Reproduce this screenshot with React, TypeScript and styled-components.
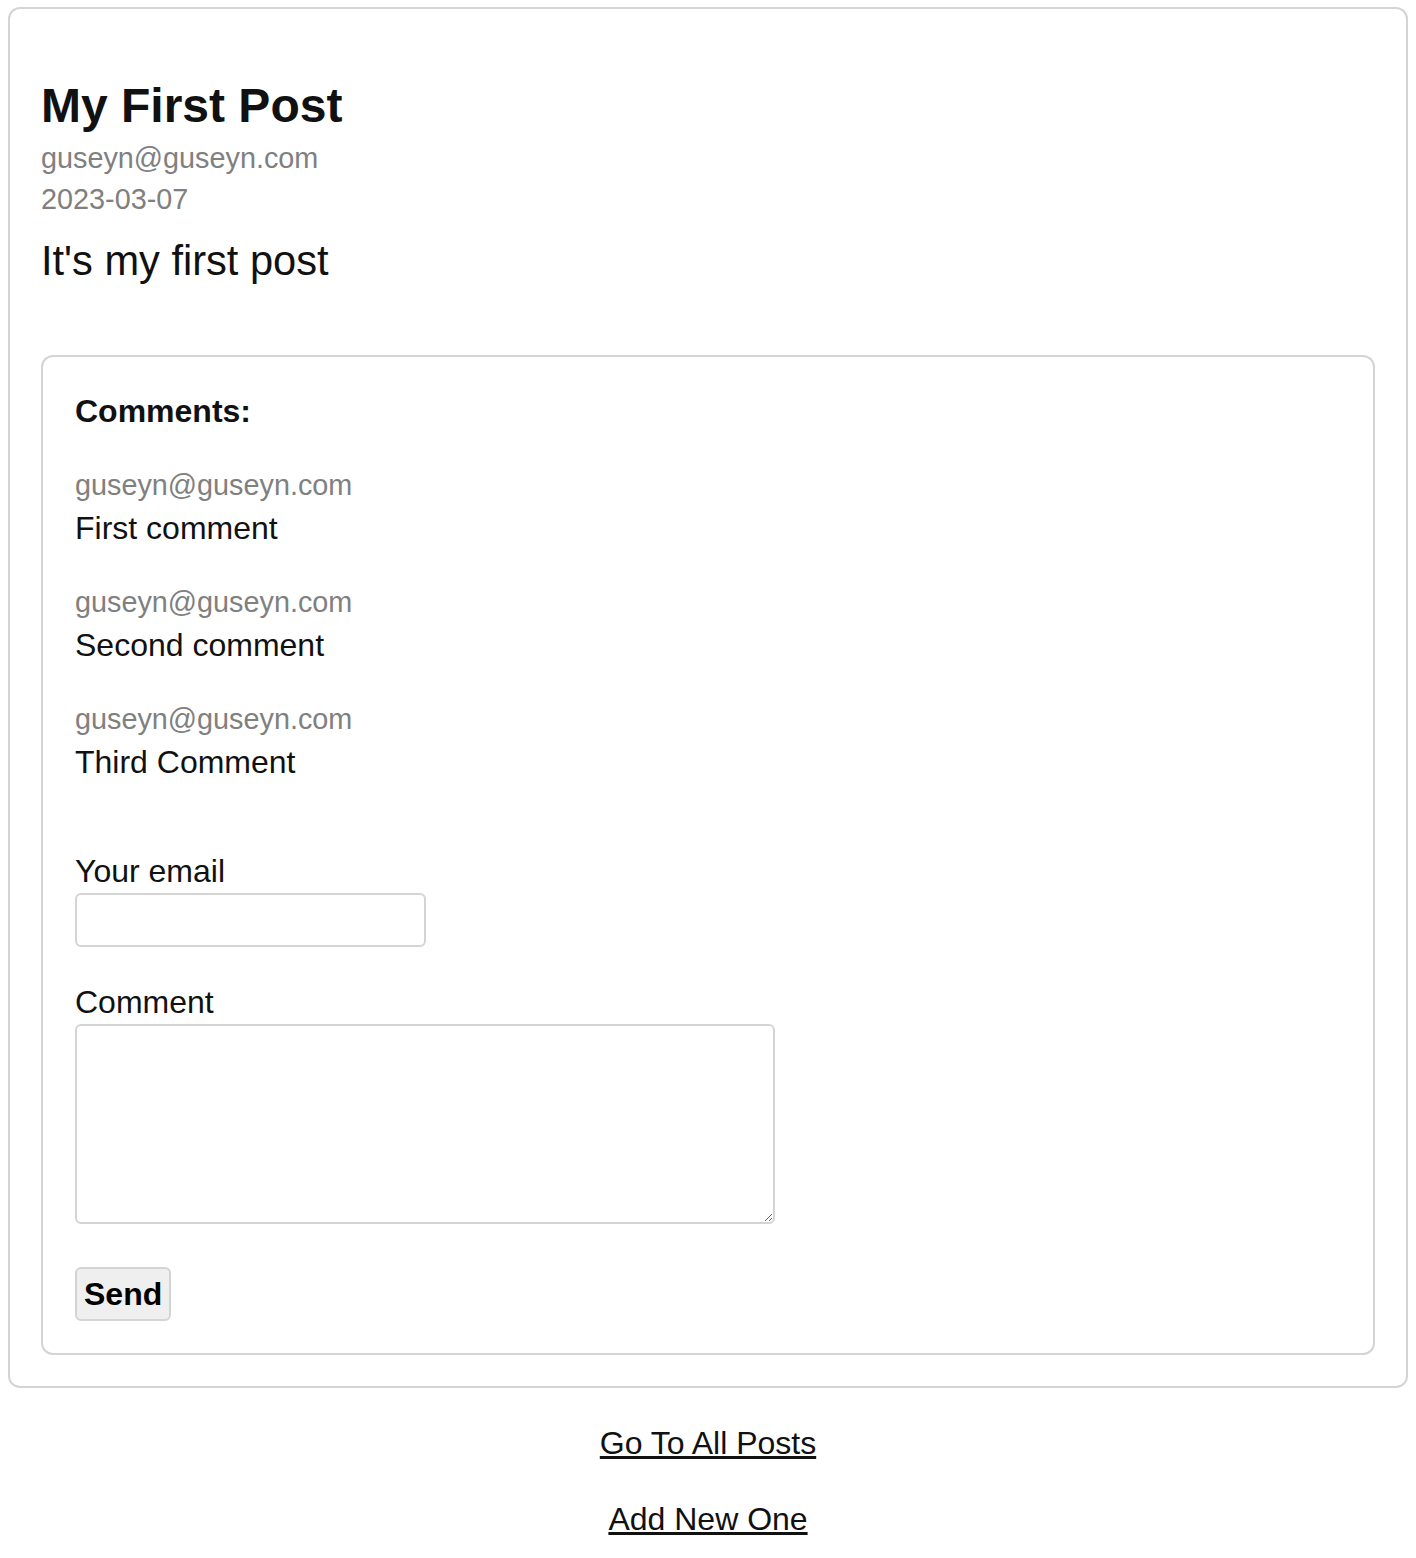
import React from "react";
import styled, { createGlobalStyle } from "styled-components";

const GlobalStyle = createGlobalStyle`
  body {
    margin: 7px 8px 8px 8px;
    font-family: "Liberation Sans", Arial, Helvetica, sans-serif;
    color: #111;
    background: #fff;
  }
`;

const PostCard = styled.article`
  border: 2px solid #d4d4d4;
  border-radius: 12px;
  padding: 68px 31px 31px;
`;

const Title = styled.h1`
  margin: 0;
  font-size: 48px;
  line-height: 58px;
  font-weight: 700;
  color: #111;
`;

const Meta = styled.div<{ $top: number; $lh: number }>`
  padding-top: ${(p) => p.$top}px;
  font-size: 28.8px;
  line-height: ${(p) => p.$lh}px;
  color: #808080;
`;

const Body = styled.p`
  margin: 11px 0 0;
  font-size: 41.6px;
  line-height: 60px;
  color: #111;
`;

const CommentsCard = styled.section`
  margin-top: 64px;
  border: 2px solid #d4d4d4;
  border-radius: 12px;
  padding: 34px 32px 32px;
`;

const Heading = styled.h3`
  margin: 0;
  font-size: 32px;
  line-height: 40px;
  font-weight: 700;
`;

const CommentList = styled.div`
  margin-top: 29px;
  display: flex;
  flex-direction: column;
  gap: 25px;
`;

const CommentItem = styled.div`
  display: flex;
  flex-direction: column;
`;

const CommentAuthor = styled.div`
  padding-top: 6px;
  font-size: 28.8px;
  line-height: 38px;
  color: #808080;
`;

const CommentText = styled.div`
  font-size: 32px;
  line-height: 48px;
  color: #111;
`;

const Form = styled.form`
  margin-top: 65px;
  display: flex;
  flex-direction: column;
  align-items: flex-start;
`;

const Field = styled.div<{ $gap: number }>`
  display: flex;
  flex-direction: column;
  align-items: flex-start;
  gap: ${(p) => p.$gap}px;
  & + & {
    margin-top: 35px;
  }
`;

const Label = styled.label`
  font-size: 32px;
  line-height: 40px;
  color: #111;
`;

const Input = styled.input`
  box-sizing: border-box;
  width: 351px;
  height: 54px;
  border: 2px solid #d4d4d4;
  border-radius: 6px;
  font-size: 28px;
  font-family: inherit;
  padding: 4px 8px;
  background: #fff;
  outline: none;
`;

const TextArea = styled.textarea`
  box-sizing: border-box;
  width: 700px;
  height: 200px;
  border: 2px solid #d4d4d4;
  border-radius: 6px;
  font-size: 28px;
  font-family: inherit;
  padding: 4px 8px;
  background: #fff;
  outline: none;
`;

const SendButton = styled.button`
  box-sizing: border-box;
  margin-top: 43px;
  height: 54px;
  padding: 0 7px;
  border: 2px solid #d4d4d4;
  border-radius: 6px;
  background: #efefef;
  font-family: inherit;
  font-size: 32px;
  font-weight: 700;
  color: #000;
  cursor: pointer;
`;

const Nav = styled.nav`
  margin-top: 35px;
  display: flex;
  flex-direction: column;
  align-items: center;
  gap: 36px;
`;

const NavLink = styled.a`
  font-size: 32px;
  line-height: 40px;
  color: #111;
  text-decoration: underline;
`;

const comments = [
  { author: "guseyn@guseyn.com", text: "First comment" },
  { author: "guseyn@guseyn.com", text: "Second comment" },
  { author: "guseyn@guseyn.com", text: "Third Comment" },
];

export default function App() {
  return (
    <>
      <GlobalStyle />
      <PostCard>
        <Title>My First Post</Title>
        <Meta $top={4} $lh={39}>guseyn@guseyn.com</Meta>
        <Meta $top={0} $lh={42}>2023-03-07</Meta>
        <Body>It's my first post</Body>
        <CommentsCard>
          <Heading>Comments:</Heading>
          <CommentList>
            {comments.map((c, i) => (
              <CommentItem key={i}>
                <CommentAuthor>{c.author}</CommentAuthor>
                <CommentText>{c.text}</CommentText>
              </CommentItem>
            ))}
          </CommentList>
          <Form onSubmit={(e) => e.preventDefault()}>
            <Field $gap={2}>
              <Label htmlFor="email">Your email</Label>
              <Input id="email" type="email" />
            </Field>
            <Field $gap={2}>
              <Label htmlFor="comment">Comment</Label>
              <TextArea id="comment" />
            </Field>
            <SendButton type="submit">Send</SendButton>
          </Form>
        </CommentsCard>
      </PostCard>
      <Nav>
        <NavLink href="#">Go To All Posts</NavLink>
        <NavLink href="#">Add New One</NavLink>
      </Nav>
    </>
  );
}
